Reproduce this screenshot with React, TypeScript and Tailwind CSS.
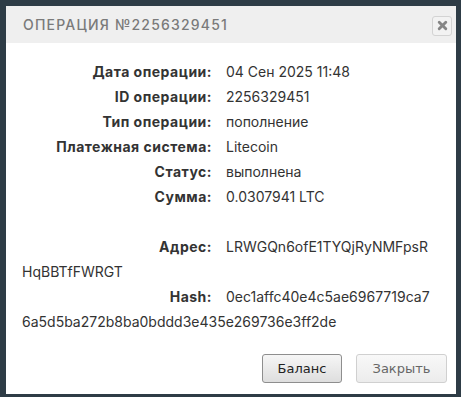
import React from 'react';

const rows = [
  { label: 'Дата операции:', value: '04 Сен 2025 11:48' },
  { label: 'ID операции:', value: '2256329451' },
  { label: 'Тип операции:', value: 'пополнение' },
  { label: 'Платежная система:', value: 'Litecoin' },
  { label: 'Статус:', value: 'выполнена' },
  { label: 'Сумма:', value: '0.0307941 LTC' },
];

// long values wrap back to the left edge, as in the original dialog
const longRows = [
  { label: 'Адрес:', head: 'LRWGQn6ofE1TYQjRyNMFpsR', tail: 'HqBBTfFWRGT' },
  { label: 'Hash:', head: '0ec1affc40e4c5ae6967719ca7', tail: '6a5d5ba272b8ba0bddd3e435e269736e3ff2de' },
];

const App = () => {
  return (
    <div className="w-[461px] h-[397px] bg-[#2e3c46] pt-[6px] pl-[6px] pr-[5px] pb-[3px]">
      <div className="w-[450px] h-[388px] bg-white flex flex-col font-['Inter',sans-serif] text-[#333]">
        {/* Header */}
        <div className="h-[37px] bg-[#efefef] flex items-center justify-between pl-[17px] pr-[4px]">
          <span className="text-[14px] tracking-[1.2px] text-[#7a7a7a] uppercase font-medium">
            Операция №2256329451
          </span>
          <button className="w-[20px] h-[20px] mt-[2px] rounded-[3px] border border-[#d3d3d3] bg-[#f2f2f2] flex items-center justify-center">
            <svg width="11" height="11" viewBox="0 0 10 10">
              <path d="M2 2 L8 8 M8 2 L2 8" stroke="#858585" strokeWidth="2.6" strokeLinecap="round" />
            </svg>
          </button>
        </div>

        {/* Body */}
        <div className="flex-1 pt-[16px] pl-[16px] pr-[10px] text-[14px] leading-[25px]">
          {rows.map((row) => (
            <div key={row.label}>
              <span className="inline-block w-[190px] text-right mr-[14px] font-bold tracking-[0.5px]">{row.label}</span>
              <span>{row.value}</span>
            </div>
          ))}
          <div className="h-[25px]" />
          {longRows.map((row) => (
            <div key={row.label}>
              <span className="inline-block w-[190px] text-right mr-[14px] font-bold tracking-[0.5px]">{row.label}</span>
              {row.head}
              <br />
              {row.tail}
            </div>
          ))}
        </div>

        {/* Footer */}
        <div className="flex justify-end gap-[14px] pr-[9px] pb-[11px] font-['DejaVu_Sans',sans-serif] text-[13px]">
          <button className="w-[80px] h-[29px] rounded-[3px] border border-[#8e8e8e] bg-gradient-to-b from-[#f6f6f6] to-[#dedede] text-[#222]">
            Баланс
          </button>
          <button className="w-[91px] h-[29px] rounded-[3px] border border-[#d0d0d0] bg-gradient-to-b from-[#f8f8f8] to-[#ececec] text-[#666]">
            Закрыть
          </button>
        </div>
      </div>
    </div>
  );
};

export default App;
